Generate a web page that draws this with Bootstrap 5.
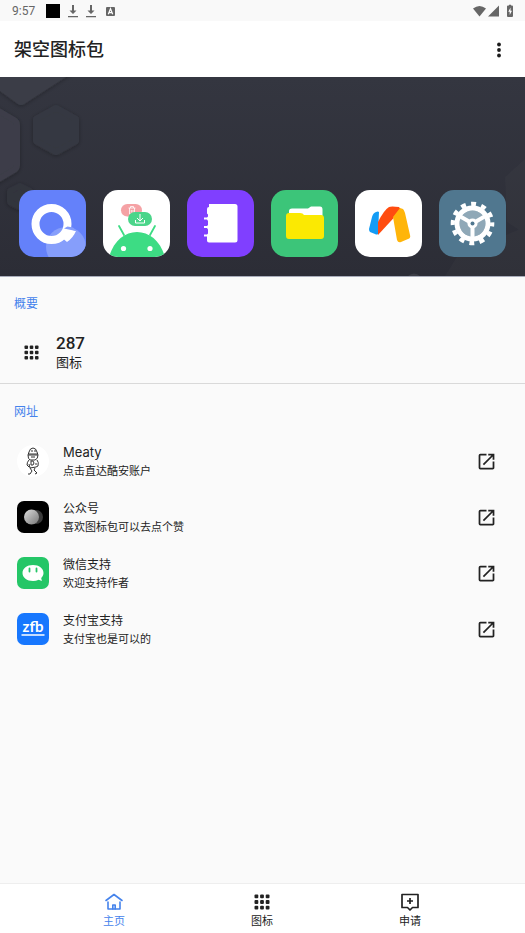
<!DOCTYPE html>
<html lang="zh-CN">
<head>
<meta charset="utf-8">
<meta name="viewport" content="width=device-width, initial-scale=1">
<title>架空图标包</title>
<link href="https://cdn.jsdelivr.net/npm/bootstrap@5.3.0/dist/css/bootstrap.min.css" rel="stylesheet">
<style>
body{background:#fafafa;color:#222;font-family:Inter,"Noto Sans CJK SC",sans-serif;font-size:12px;line-height:18px}
svg{display:block;flex:none}
.status{height:21px;color:#666;padding:1px 12px 0;font:12px/20px Roboto,sans-serif;background:#f9f9f9}
.clock{width:34px}
.appbar{height:56px;padding:1px 14px 0}
.appbar h1{font-size:18px;line-height:24px;font-weight:500}
.menu{width:24px;height:40px}
.hero{height:200px;padding:0 19px 19px;background:linear-gradient(#343640,#2c2d36);border-bottom:1px solid #a9adbb}
.hero-art{position:absolute;inset:0;width:100%;height:100%}
.app{width:67px;height:67px;position:relative}
.sec{font-size:12px;line-height:18px;color:#4583ec;font-weight:400}
.summary{padding:18px 14px 11px;border-bottom:1px solid #d9d9d9}
.stat{margin-top:19px;padding-left:10px;gap:17px}
.num{font:500 17px/20px Roboto,sans-serif;padding-top:1px}
.stat-label{font-size:13px;line-height:19px}
.sites{padding:19px 0}
.sites .sec{padding:0 14px;margin-bottom:12px}
.site{height:56px;padding:0 28px 0 17px;color:#222;gap:14px}
.site-text{padding-top:2px}
.site-title{font-size:12px;line-height:19px}
.latin{font-size:13px}
.site-sub{font-size:11px;line-height:19px}
.tabs{height:50px;border-top:1px solid #eee;padding:0 41px 0 40px}
.tab{color:#222;font-size:11px;line-height:18px;padding-top:8px}
.tab.active{color:#4583ec}
</style>
<script src="https://cdn.jsdelivr.net/npm/bootstrap@5.3.0/dist/js/bootstrap.bundle.min.js"></script>
</head>
<body class="d-flex flex-column min-vh-100">
<svg width="0" height="0" class="position-absolute" aria-hidden="true">
<symbol id="grid" viewBox="0 0 16 16"><g fill="currentColor"><rect x="0.500" y="0.500" width="3.800" height="3.800" rx="1"/><rect x="6.100" y="0.500" width="3.800" height="3.800" rx="1"/><rect x="11.700" y="0.500" width="3.800" height="3.800" rx="1"/><rect x="0.500" y="6.100" width="3.800" height="3.800" rx="1"/><rect x="6.100" y="6.100" width="3.800" height="3.800" rx="1"/><rect x="11.700" y="6.100" width="3.800" height="3.800" rx="1"/><rect x="0.500" y="11.700" width="3.800" height="3.800" rx="1"/><rect x="6.100" y="11.700" width="3.800" height="3.800" rx="1"/><rect x="11.700" y="11.700" width="3.800" height="3.800" rx="1"/></g></symbol>
<symbol id="launch" viewBox="0 0 24 24"><path fill="currentColor" d="M19 19H5V5h7V3H5a2 2 0 0 0-2 2v14a2 2 0 0 0 2 2h14c1.100 0 2-.9 2-2v-7h-2zM14 3v2h3.590l-9.830 9.830 1.410 1.410L19 6.410V10h2V3z"/></symbol>
<symbol id="down" viewBox="0 0 10 13"><path fill="#666" d="M4 0h2v5.500h2.500L5 9 1.500 5.500H4zM0 11h10v1.300H0z"/></symbol>
</svg>

<div class="status d-flex align-items-center">
  <span class="clock">9:57</span>
  <svg width="14" height="14"><rect width="14" height="14" fill="#000"/></svg>
  <svg class="ms-2" width="10" height="13"><use href="#down"/></svg>
  <svg class="ms-2" width="10" height="13"><use href="#down"/></svg>
  <svg class="ms-2" width="12" height="10" viewBox="0 0 12 10"><rect x="2" y="1" width="9" height="9" rx="1" fill="#666"/><path d="M4.300 8.300 6.500 2.700l2.200 5.600M5.100 6.600h2.800" fill="none" stroke="#fff" stroke-width="1.200"/></svg>
  <svg class="ms-auto" width="40" height="14" viewBox="0 0 40 14"><path fill="#666" d="M0 4.500Q6.500-.5 13 4.500L6.500 12.500zM15 12.500 26 1.500v11zM35 1.500h1V.8h2v.7h1q1 0 1 1v9.500q0 1-1 1h-4q-1 0-1-1V2.500q0-1 1-1z"/><path fill="#fff" d="M37.500 3.500 35.300 7.700h1.400v3.200L39 6.700h-1.500z"/></svg>
</div>

<header class="appbar bg-white d-flex align-items-center justify-content-between">
  <h1 class="m-0">架空图标包</h1>
  <button class="menu btn p-0 border-0 d-flex align-items-center justify-content-center" type="button" aria-label="更多选项"><svg width="4" height="16" viewBox="0 0 4 16"><g fill="#1c1c1c"><circle cx="2" cy="2.500" r="1.900"/><circle cx="2" cy="8" r="1.900"/><circle cx="2" cy="13.500" r="1.900"/></g></svg></button>
</header>

<section class="hero position-relative d-flex align-items-end justify-content-between">
  <svg class="hero-art" viewBox="0 0 525 199" preserveAspectRatio="xMinYMin slice" aria-hidden="true">
    <defs><filter id="sh" x="-30%" y="-30%" width="160%" height="160%"><feDropShadow dx="0" dy="1" stdDeviation="2" flood-color="#191a20" flood-opacity=".3"/></filter></defs>
    <g filter="url(#sh)" stroke-linejoin="round" stroke-width="6">
      <path d="M-30-8 18 27q3 2 6 0L78-8z" fill="#3b3d47"/>
      <path d="M-3 33 14 43q3 2 3 5v40q0 3-3 5L-3 103z" fill="#3c3e48" stroke="#3c3e48"/>
      <path d="M56 31 76 42v22L56 75 36 64V42z" fill="#363842" stroke="#363842"/>
      <path d="M20 109 30 114v11l-10 5-10-5v-11z" fill="#32343d" stroke="#32343d"/>
    </g>
    <path d="M445 199 458 178 525 150V199zM505 100 525 82v75l-18-12z" fill="#fff" opacity=".02"/>
    <path d="M408 199q6-5 12 0z" fill="#fff" opacity=".08"/>
  </svg>
  <svg class="app" viewBox="0 0 67 67"><defs><clipPath id="tile"><rect width="67" height="67" rx="15"/></clipPath></defs><g clip-path="url(#tile)"><path fill="#6481fa" d="M0 0h67v67H0z"/><circle cx="47" cy="57" r="20" fill="#869efb"/><circle cx="32.500" cy="34" r="16" fill="none" stroke="#fff" stroke-width="8"/><path d="M44 37 57 41q-3 7-9 11l-7-6q4-3 3-9z" fill="#fff"/><path d="M45 38.500 48.500 36.500 54 37.500 58 41.200z" fill="#869efb"/></g></svg>
  <svg class="app" viewBox="0 0 67 67"><g clip-path="url(#tile)"><path fill="#fff" d="M0 0h67v67H0z"/><rect x="18" y="14" width="21" height="12.500" rx="6.250" fill="#f5a2a5"/><path d="M25.500 18h7M26.500 18v6h5v-6M27.500 18v-1.500h3V18M28.300 20v2.500M30 20v2.500" stroke="#fff" stroke-width=".8" fill="none"/><rect x="25" y="22" width="24" height="14" rx="7" fill="#4bd58a"/><path d="M37 24v7M34 28l3 3 3-3M32.500 30v3h9v-3" fill="none" stroke="#fff"/><path d="M5 71C9 52 21 42 34 42s25 10 29 29z" fill="#3ddc84"/><path d="m16 36 5 9M52 36l-5 9" stroke="#3ddc84" stroke-width="1.800" stroke-linecap="round"/><circle cx="20.500" cy="58.500" r="2.600" fill="#fff"/><circle cx="47" cy="58.500" r="2.600" fill="#fff"/></g></svg>
  <svg class="app" viewBox="0 0 67 67"><rect width="67" height="67" rx="15" fill="#803fff"/><path d="M22 14h26q2.500 0 2.500 2.500V50q0 2.500-2.500 2.500H22q-2 0-2-2v-4h-3v-2h3l1-1v-4l-1-1.500h-3v-2h3l1-1v-4l-1-1.500h-3v-2h3l1-1v-2l-1-1v-4.500q0-2 2-2z" fill="#fff"/></svg>
  <svg class="app" viewBox="0 0 67 67"><rect width="67" height="67" rx="15" fill="#3cc579"/><path d="M18 26v-5q0-2.500 3-2.500h16l3-2h9q2.500 0 2.500 3V26z" fill="#fff"/><path d="M18 23h11q3 0 4 2h17q3 0 3 3v18q0 3-3 3H18q-3 0-3-3V26q0-3 3-3z" fill="#fbe902"/></svg>
  <svg class="app" viewBox="0 0 67 67"><rect width="67" height="67" rx="15" fill="#fff"/><path d="M21 22q2-1 3 0l-1 22q-1 1-3 0l-5-2q-1-1-1-3l3-12q1-4 4-5z" fill="#139cf5"/><path d="M23 32q6-12 11-15 2-1 10 0l2 3-23 25z" fill="#ff4c10"/><path d="m45 18 3 1q1 1 2 4l5 22q1 3-2 4l-7 3q-3 1-4-2l-4-23z" fill="#ffb50a"/></svg>
  <svg class="app" viewBox="0 0 67 67"><rect width="67" height="67" rx="15" fill="#50778f"/><circle cx="33.500" cy="33.500" r="13" fill="#8fa8b7"/><g fill="none" stroke="#fff"><circle cx="33.500" cy="33.500" r="15.500" stroke-width="5"/><circle cx="33.500" cy="33.500" r="19.700" stroke-width="4.200" stroke-dasharray="5 5.314" stroke-dashoffset="2"/><path d="M33.500 33.500 20.500 26M33.500 33.500l13-7.500M33.500 33.500v15" stroke-width="4"/></g><circle cx="33.500" cy="33.500" r="5" fill="#fff"/><circle cx="33.500" cy="33.500" r="2" fill="#50778f"/></svg>
</section>

<main class="flex-grow-1">
  <section class="summary">
    <h2 class="sec m-0">概要</h2>
    <div class="stat d-flex align-items-center">
      <svg width="15" height="15"><use href="#grid"/></svg>
      <div><div class="num">287</div><div class="stat-label">图标</div></div>
    </div>
  </section>
  <section class="sites">
    <h2 class="sec mt-0">网址</h2>
    <a class="site d-flex align-items-center text-decoration-none" href="#meaty">
      <svg width="32" height="32" viewBox="0 0 32 32"><circle cx="16" cy="16" r="16" fill="#fff"/><g fill="none" stroke="#333" stroke-width="1"><path d="M12 7q1-4 4-4t4 4l1 3H11z"/><path d="M11 10q0 4 2 5h5q3-1 3-5M12 9h8M15 5v2M18 5v2M14 12h4"/><path d="M12 15q-2 2-2 5l2 2M20 15q2 2 1 6l-2 1M14 16v4h2q2-2 0-4zM12 19l1 4 6-1"/><path d="m13 23 2 3-2 3h-2M18 23l-1 2 3 3-2 1M19 18v2"/></g></svg>
      <span class="site-text flex-grow-1"><span class="site-title latin d-block">Meaty</span><span class="site-sub d-block">点击直达酷安账户</span></span>
      <svg width="21" height="21"><use href="#launch"/></svg>
    </a>
    <a class="site d-flex align-items-center text-decoration-none" href="#official">
      <svg width="32" height="32" viewBox="0 0 32 32"><defs><linearGradient id="moon" x2="1" y2="1"><stop stop-color="#ddd"/><stop offset="1" stop-color="#777"/></linearGradient></defs><rect width="32" height="32" rx="7"/><circle cx="19" cy="16" r="7" fill="#3b3b3b"/><circle cx="14.500" cy="16" r="7.500" fill="url(#moon)"/></svg>
      <span class="site-text flex-grow-1"><span class="site-title d-block">公众号</span><span class="site-sub d-block">喜欢图标包可以去点个赞</span></span>
      <svg width="21" height="21"><use href="#launch"/></svg>
    </a>
    <a class="site d-flex align-items-center text-decoration-none" href="#wechat">
      <svg width="32" height="32" viewBox="0 0 32 32"><rect width="32" height="32" rx="7" fill="#24c667"/><path d="M16 8c6 0 10.500 3.500 10.500 8 0 2-1 3.600-2.300 5l.7 3-3.200-1.300Q19 24 16 24C10 24 5.500 20.500 5.500 16S10 8 16 8z" fill="#fff"/><path d="M12.500 11.500v3M19.500 11.500v3" stroke="#24c667" stroke-width="1.800" stroke-linecap="round"/></svg>
      <span class="site-text flex-grow-1"><span class="site-title d-block">微信支持</span><span class="site-sub d-block">欢迎支持作者</span></span>
      <svg width="21" height="21"><use href="#launch"/></svg>
    </a>
    <a class="site d-flex align-items-center text-decoration-none" href="#alipay">
      <svg width="32" height="32" viewBox="0 0 32 32"><rect width="32" height="32" rx="7" fill="#1777fe"/><text x="16" y="19" text-anchor="middle" font-family="Lato,sans-serif" font-weight="700" font-size="15" fill="#fff">zfb</text><path d="M4.500 22h23" stroke="#fff" stroke-width="1.500"/></svg>
      <span class="site-text flex-grow-1"><span class="site-title d-block">支付宝支持</span><span class="site-sub d-block">支付宝也是可以的</span></span>
      <svg width="21" height="21"><use href="#launch"/></svg>
    </a>
  </section>
</main>

<nav class="tabs bg-white d-flex sticky-bottom" aria-label="主导航">
  <a class="tab active col d-flex flex-column align-items-center text-decoration-none" href="#home" aria-current="page"><svg width="20" height="20" viewBox="0 0 20 20"><g fill="none" stroke="currentColor" stroke-width="1.600" stroke-linecap="round" stroke-linejoin="round"><path d="M2 8.500 10 2.500l8 6M4 10v7h12v-7"/><path d="M8.800 17v-4h2.400v4"/></g></svg>主页</a>
  <a class="tab col d-flex flex-column align-items-center text-decoration-none" href="#icons"><svg width="20" height="20" viewBox="-2 -2 20 20"><use href="#grid" width="16" height="16"/></svg>图标</a>
  <a class="tab col d-flex flex-column align-items-center text-decoration-none" href="#request"><svg width="20" height="20" viewBox="0 0 20 20"><path d="M2 2.500h16v13h-5.500L10 18l-2.500-2.500H2zM10 6v6M7 9h6" fill="none" stroke="currentColor" stroke-width="1.700" stroke-linejoin="round"/></svg>申请</a>
</nav>
</body>
</html>
